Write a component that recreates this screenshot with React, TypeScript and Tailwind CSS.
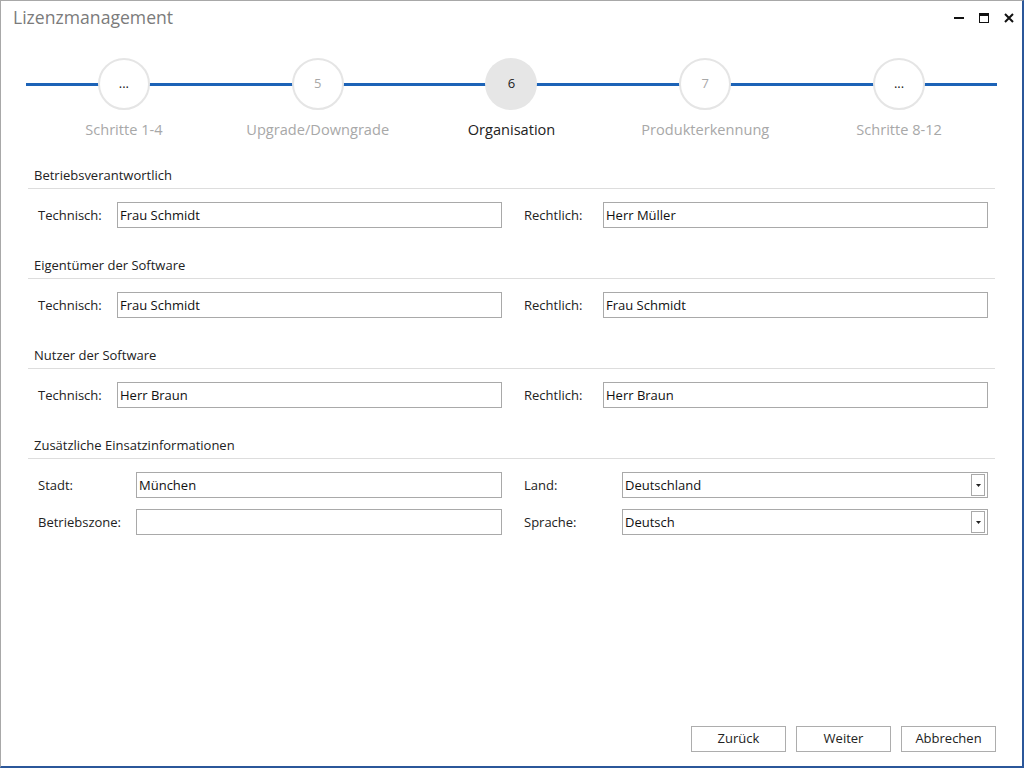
import React from "react";

const font = { fontFamily: '"Open Sans", "Noto Sans", Arial, sans-serif' };

const steps = [
  { n: "...", label: "Schritte 1-4" },
  { n: "5", label: "Upgrade/Downgrade" },
  { n: "6", label: "Organisation", active: true },
  { n: "7", label: "Produkterkennung" },
  { n: "...", label: "Schritte 8-12" },
];

function SectionTitle({ title }: { title: string }) {
  return (
    <div className="border-b border-[#dddddd] pb-[3px]">
      <div className="h-[20px] pl-[6px] text-[13px] leading-[20px] text-[#222]">{title}</div>
    </div>
  );
}

function Input({ value, w }: { value: string; w: string }) {
  return (
    <div className={`${w} h-[26px] border border-[#a9a9a9] bg-white px-[2px] text-[13px] leading-[24px] text-[#111]`}>
      {value}
    </div>
  );
}

function Select({ value }: { value: string }) {
  return (
    <div className="flex h-[26px] w-[366px] items-center border border-[#a9a9a9] bg-white pl-[2px] pr-[2px] text-[13px] text-[#111]">
      <div className="flex-1 leading-[24px]">{value}</div>
      <div className="flex h-[22px] w-[14px] items-center justify-center border border-[#a9a9a9]">
        <svg width="5" height="3" viewBox="0 0 5 3">
          <path d="M0 0 H5 L2.5 3 Z" fill="#222" />
        </svg>
      </div>
    </div>
  );
}

function Label({ text, w, ml }: { text: string; w: string; ml?: boolean }) {
  return <div className={`${w} ${ml ? "ml-[22px]" : ""} pt-[1px] text-[13px] text-[#222]`}>{text}</div>;
}

function PersonSection({ title, tech, legal, first }: { title: string; tech: string; legal: string; first?: boolean }) {
  return (
    <div className={first ? "" : "mt-[27px]"}>
      <SectionTitle title={title} />
      <div className="mt-[13px] flex items-center pl-[10px]">
        <Label text="Technisch:" w="w-[79px]" />
        <Input value={tech} w="w-[385px]" />
        <Label text="Rechtlich:" w="w-[79px]" ml />
        <Input value={legal} w="w-[385px]" />
      </div>
    </div>
  );
}

function Btn({ label }: { label: string }) {
  return (
    <div className="flex h-[26px] w-[95px] items-center justify-center border border-[#adadad] bg-white text-[13px] text-[#222]">
      {label}
    </div>
  );
}

export default function App() {
  return (
    <div
      style={font}
      className="flex h-[768px] w-[1024px] flex-col border-l border-t border-l-[#a8a8a8] border-t-[#a8a8a8] border-r-2 border-b-2 border-r-[#2b579a] border-b-[#2b579a] bg-white"
    >
      {/* title bar */}
      <div className="flex h-[33px] items-center justify-between pl-[12px] pr-[8px]">
        <div className="text-[17.6px] text-[#7b7b7b]">Lizenzmanagement</div>
        <div className="flex items-center gap-[15px]">
          <svg width="10" height="10" viewBox="0 0 10 10">
            <rect x="0" y="4" width="10" height="2" fill="#111" />
          </svg>
          <svg width="10" height="10" viewBox="0 0 10 10">
            <rect x="0.5" y="0.5" width="9" height="9" fill="none" stroke="#111" strokeWidth="1" />
            <rect x="0" y="0" width="10" height="3" fill="#111" />
          </svg>
          <svg width="10" height="10" viewBox="0 0 10 10">
            <path d="M1 1 L9 9 M9 1 L1 9" stroke="#111" strokeWidth="2" />
          </svg>
        </div>
      </div>

      {/* stepper */}
      <div className="relative mx-[26px] mt-[24px] flex">
        <div className="absolute left-[-1px] right-[-1px] top-[25px] h-[3px] bg-[#1c63b7]" />
        {steps.map((s, i) => (
          <div key={i} className="relative flex w-[194px] flex-col items-center">
            <div
              className={`flex h-[52px] w-[52px] items-center justify-center rounded-full text-[13px] ${
                s.active ? "bg-[#e6e6e6] text-[#222]" : "border-2 border-[#e5e5e5] bg-white"
              } ${s.n === "..." ? "text-[#222]" : s.active ? "" : "text-[#a8a8a8]"}`}
            >
              {s.n}
            </div>
            <div className={`mt-[9px] text-[14.6px] leading-[20px] ${s.active ? "text-[#222]" : "text-[#a8a8a8]"}`}>
              {s.label}
            </div>
          </div>
        ))}
      </div>

      {/* form */}
      <div className="mx-[27px] mt-[26px]">
        <PersonSection first title="Betriebsverantwortlich" tech="Frau Schmidt" legal="Herr Müller" />
        <PersonSection title="Eigentümer der Software" tech="Frau Schmidt" legal="Frau Schmidt" />
        <PersonSection title="Nutzer der Software" tech="Herr Braun" legal="Herr Braun" />
        <div className="mt-[27px]">
          <SectionTitle title="Zusätzliche Einsatzinformationen" />
          <div className="mt-[13px] flex flex-col gap-[11px] pl-[10px]">
            <div className="flex items-center">
              <Label text="Stadt:" w="w-[98px]" />
              <Input value="München" w="w-[366px]" />
              <Label text="Land:" w="w-[98px]" ml />
              <Select value="Deutschland" />
            </div>
            <div className="flex items-center">
              <Label text="Betriebszone:" w="w-[98px]" />
              <Input value="" w="w-[366px]" />
              <Label text="Sprache:" w="w-[98px]" ml />
              <Select value="Deutsch" />
            </div>
          </div>
        </div>
      </div>

      <div className="flex-1" />

      {/* buttons */}
      <div className="mb-[14px] mr-[26px] flex justify-end gap-[10px]">
        <Btn label="Zurück" />
        <Btn label="Weiter" />
        <Btn label="Abbrechen" />
      </div>
    </div>
  );
}
